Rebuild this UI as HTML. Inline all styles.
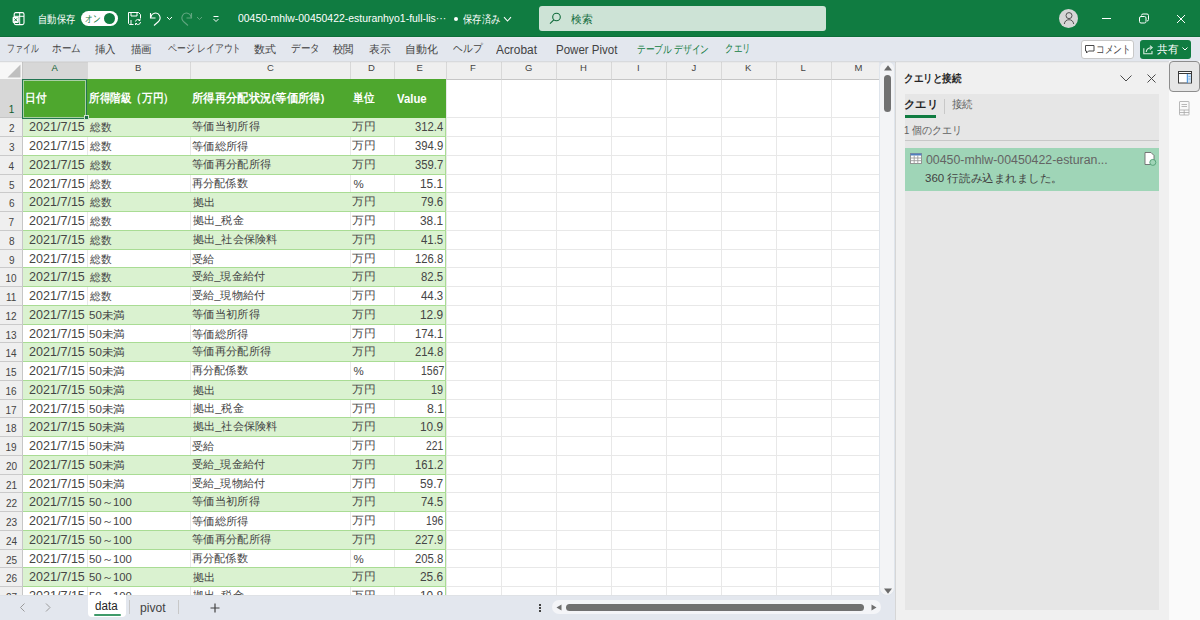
<!DOCTYPE html>
<html><head><meta charset="utf-8">
<style>
*{box-sizing:border-box;margin:0;padding:0}
html,body{width:1200px;height:620px;overflow:hidden;background:#fff}
body{position:relative;font-family:"Liberation Sans",sans-serif;color:#242424}
.a{position:absolute}
i{font-style:normal}
/* title bar */
#tb{position:absolute;left:0;top:0;width:1200px;height:37px;background:#107c41;color:#fff;border-bottom:1px solid #0d6e39}
#tb .t{position:absolute;white-space:nowrap}
#search{position:absolute;left:539px;top:6px;width:287px;height:25px;background:#cde3d6;border-radius:3px}
/* ribbon */
#rb{position:absolute;left:0;top:37px;width:1200px;height:24px;background:#e3e7ee;border-top:1px solid #e8ebf1}
#rb .tab{position:absolute;top:6px;font-size:11.5px;line-height:14px;color:#424242;white-space:nowrap}
#rb .tab.g{color:#107c41}
/* grid */
#grid{position:absolute;left:0;top:61px;width:880px;height:534px;background:#fff;overflow:hidden}
.ch{position:absolute;top:0;height:19px;background:#efefef;border-right:1px solid #d8d8d8;border-bottom:1px solid #c6c6c6}
.ch.sel{background:#d7d7d7;border-bottom:1px solid #1e6e43}
.rh{position:absolute;left:0;width:23px;background:#efefef;border-right:1px solid #c6c6c6;border-bottom:1px solid #cacaca}
.vg{position:absolute;top:19px;width:1px;height:534px;background:#e8e8e8}
.hg{position:absolute;left:22px;width:858px;height:1px;background:#e8e8e8}
.band{position:absolute;left:23px;width:423px;background:#daf2d0;border-bottom:1px solid #a9dc94;border-right:1px solid #a9dc94}
.nob{position:absolute;left:23px;width:423px;border-bottom:1px solid #a9dc94;border-right:1px solid #a9dc94}
.tx{position:absolute;line-height:1;white-space:nowrap;transform-origin:0 0}
/* scrollbar */
#vs{position:absolute;left:879px;top:61px;width:16px;height:559px;background:#e3e7ee}
/* pane */
#pane{position:absolute;left:895px;top:61px;width:274px;height:559px;background:#f0f0f0;border-left:1px solid #d6d6d6}
#side{position:absolute;left:1169px;top:61px;width:31px;height:559px;background:#fafafa}
#tabs{position:absolute;left:0;top:595px;width:879px;height:25px;background:#e3e7ee}
</style></head><body>

<div id="tb">
  <!-- excel icon -->
  <svg class="a" style="left:8px;top:8px" width="22" height="22" viewBox="0 0 22 22">
    <rect x="6.2" y="4.6" width="9.8" height="12" rx="1.6" fill="none" stroke="#fff" stroke-width="1.1"/>
    <path d="M6.2 8.3h9.8M11.7 4.6v12" fill="none" stroke="#fff" stroke-width="1"/>
    <rect x="4.6" y="8.7" width="6.2" height="6.2" rx="1.2" fill="#fff"/>
    <path d="M6.4 10.4l2.6 2.8M9 10.4l-2.6 2.8" stroke="#107c41" stroke-width="1"/>
  </svg>
  <div class="a" style="left:81px;top:10.5px;width:37px;height:15.5px;background:#fff;border-radius:8px"></div>
  <div class="a" style="left:104px;top:12.5px;width:11px;height:11px;border-radius:50%;background:#107c41"></div>
  <!-- save icon -->
  <svg class="a" style="left:127px;top:11px" width="15" height="15" viewBox="0 0 15 15" fill="none" stroke="#fff" stroke-width="1">
    <path d="M1.5 1.5h10l2 2v4M1.5 1.5v11l1 1h4"/>
    <path d="M4 1.5v3.5h6V1.5M4 13.5V9"/>
    <path d="M8.5 10.5a2.5 2.5 0 0 1 4.5-1M13.5 11a2.5 2.5 0 0 1-4.5 1.5M13 8v1.5h-1.5M8.5 14v-1.5H10"/>
  </svg>
  <!-- undo -->
  <svg class="a" style="left:149px;top:11px" width="14" height="15" viewBox="0 0 14 15" fill="none" stroke="#fff" stroke-width="1.1">
    <path d="M2 6.5a4.5 4.5 0 0 1 8.5-2c1.2 2.3 0.4 4.8-1.5 6.5L5 14.5"/>
    <path d="M1.5 2v5h5"/>
  </svg>
  <svg class="a" style="left:166px;top:16px" width="7" height="5" viewBox="0 0 7 5" fill="none" stroke="#fff" stroke-width="1"><path d="M1 1l2.5 2.5L6 1"/></svg>
  <!-- redo dim -->
  <svg class="a" style="left:179px;top:11px" width="14" height="15" viewBox="0 0 14 15" fill="none" stroke="#5fa57f" stroke-width="1.1">
    <path d="M12 6.5a4.5 4.5 0 0 0-8.5-2c-1.2 2.3-0.4 4.8 1.5 6.5L9 14.5"/>
    <path d="M12.5 2v5h-5"/>
  </svg>
  <svg class="a" style="left:196px;top:16px" width="7" height="5" viewBox="0 0 7 5" fill="none" stroke="#5fa57f" stroke-width="1"><path d="M1 1l2.5 2.5L6 1"/></svg>
  <svg class="a" style="left:212px;top:15px" width="8" height="8" viewBox="0 0 8 8" fill="none" stroke="#fff" stroke-width="1"><path d="M1.5 1.5h5M1.5 4l2.5 2.5L6.5 4"/></svg>
  <div class="a" style="left:454px;top:17px;width:4px;height:4px;border-radius:50%;background:#fff"></div>
  <svg class="a" style="left:502.5px;top:15.5px" width="9" height="7" viewBox="0 0 9 7" fill="none" stroke="#fff" stroke-width="1.1"><path d="M1 1.2l3.5 3.8 3.5-3.8"/></svg>
  <div id="search">
    <svg class="a" style="left:10px;top:6px" width="13" height="13" viewBox="0 0 13 13" fill="none" stroke="#0f6a3a" stroke-width="1.1"><circle cx="7.5" cy="5" r="3.8"/><path d="M4.8 7.8L1 11.6"/></svg>
  </div>
  <!-- avatar -->
  <div class="a" style="left:1059px;top:9px;width:19px;height:19px;border-radius:50%;background:#d6d6d6"></div>
  <svg class="a" style="left:1062px;top:11px" width="14" height="14" viewBox="0 0 14 14" fill="none" stroke="#505050" stroke-width="1"><circle cx="7" cy="4.6" r="3"/><path d="M2.3 13c0.4-2.7 2.1-4.3 4.7-4.3s4.3 1.6 4.7 4.3"/></svg>
  <div class="a" style="left:1102px;top:18px;width:9px;height:1px;background:#fff"></div>
  <svg class="a" style="left:1138px;top:13px" width="12" height="11" viewBox="0 0 12 11" fill="none" stroke="#fff" stroke-width="1"><rect x="1.5" y="3.5" width="6.5" height="6.5" rx="1.5"/><path d="M3.5 2.5a1.5 1.5 0 0 1 1.5-1.5h4a1.5 1.5 0 0 1 1.5 1.5v4a1.5 1.5 0 0 1-1.5 1.5"/></svg>
  <svg class="a" style="left:1176px;top:14px" width="10" height="10" viewBox="0 0 10 10" fill="none" stroke="#fff" stroke-width="1"><path d="M1 1l8 8M9 1L1 9"/></svg>
</div>

<div id="rb">
  <div class="a" style="left:1081px;top:2px;width:53px;height:19px;background:#fff;border:1px solid #c8c8c8;border-radius:3px"></div>
  <svg class="a" style="left:1085px;top:7px" width="10" height="9" viewBox="0 0 10 9" fill="none" stroke="#4a4a4a" stroke-width="1"><path d="M0.5 0.5h8.5v5.5h-5.5l-2 2v-2h-1z" stroke-linejoin="round"/></svg>
  <div class="a" style="left:1140px;top:2px;width:51px;height:19px;background:#107c41;border-radius:3px"></div>
  <svg class="a" style="left:1142px;top:5px" width="12" height="12" viewBox="0 0 12 12" fill="none" stroke="#d8ecdf" stroke-width="1.1"><path d="M1.8 5.2V10.8H10V8"/><path d="M4.2 9C4.4 6.4 6.2 4.8 9.6 4.6"/><path d="M7.9 2.6L10.2 4.6L7.9 6.6"/></svg>
  <svg class="a" style="left:1182px;top:9px" width="6" height="4" viewBox="0 0 6 4" fill="none" stroke="#fff" stroke-width="1"><path d="M0.5 0.5l2.5 2.5 2.5-2.5"/></svg>
</div>

<div id="grid">
  <div class="a" style="left:0;top:0;width:23px;height:19px;background:#f7f7f7;border-bottom:1px solid #c6c6c6;border-right:1px solid #c6c6c6"></div>
  <svg class="a" style="left:7px;top:3px" width="14" height="14" viewBox="0 0 14 14"><path d="M13.5 0.5v13H0.5z" fill="#bfbfbf"/></svg>
<div class="ch sel" style="left:23px;width:65px"></div>
<div class="ch" style="left:88px;width:103px"></div>
<div class="ch" style="left:191px;width:160px"></div>
<div class="ch" style="left:351px;width:44px"></div>
<div class="ch" style="left:395px;width:52px"></div>
<div class="ch" style="left:447px;width:55px"></div>
<div class="ch" style="left:502px;width:55px"></div>
<div class="ch" style="left:557px;width:55px"></div>
<div class="ch" style="left:612px;width:55px"></div>
<div class="ch" style="left:667px;width:55px"></div>
<div class="ch" style="left:722px;width:55px"></div>
<div class="ch" style="left:777px;width:55px"></div>
<div class="ch" style="left:832px;width:49px"></div>
<div class="vg" style="left:87px"></div>
<div class="vg" style="left:190px"></div>
<div class="vg" style="left:350px"></div>
<div class="vg" style="left:394px"></div>
<div class="vg" style="left:446px"></div>
<div class="vg" style="left:501px"></div>
<div class="vg" style="left:556px"></div>
<div class="vg" style="left:611px"></div>
<div class="vg" style="left:666px"></div>
<div class="vg" style="left:721px"></div>
<div class="vg" style="left:776px"></div>
<div class="vg" style="left:831px"></div>
<div class="hg" style="top:56px"></div>
<div class="hg" style="top:75px"></div>
<div class="hg" style="top:94px"></div>
<div class="hg" style="top:113px"></div>
<div class="hg" style="top:131px"></div>
<div class="hg" style="top:150px"></div>
<div class="hg" style="top:169px"></div>
<div class="hg" style="top:188px"></div>
<div class="hg" style="top:206px"></div>
<div class="hg" style="top:225px"></div>
<div class="hg" style="top:244px"></div>
<div class="hg" style="top:263px"></div>
<div class="hg" style="top:281px"></div>
<div class="hg" style="top:300px"></div>
<div class="hg" style="top:319px"></div>
<div class="hg" style="top:338px"></div>
<div class="hg" style="top:356px"></div>
<div class="hg" style="top:375px"></div>
<div class="hg" style="top:394px"></div>
<div class="hg" style="top:413px"></div>
<div class="hg" style="top:431px"></div>
<div class="hg" style="top:450px"></div>
<div class="hg" style="top:469px"></div>
<div class="hg" style="top:488px"></div>
<div class="hg" style="top:506px"></div>
<div class="hg" style="top:525px"></div>
<div class="hg" style="top:544px"></div>
<div class="hg" style="top:563px"></div>
<div class="rh" style="top:57px;height:19px"></div>
<div class="rh" style="top:76px;height:19px"></div>
<div class="rh" style="top:95px;height:19px"></div>
<div class="rh" style="top:114px;height:18px"></div>
<div class="rh" style="top:132px;height:19px"></div>
<div class="rh" style="top:151px;height:19px"></div>
<div class="rh" style="top:170px;height:19px"></div>
<div class="rh" style="top:189px;height:18px"></div>
<div class="rh" style="top:207px;height:19px"></div>
<div class="rh" style="top:226px;height:19px"></div>
<div class="rh" style="top:245px;height:19px"></div>
<div class="rh" style="top:264px;height:18px"></div>
<div class="rh" style="top:282px;height:19px"></div>
<div class="rh" style="top:301px;height:19px"></div>
<div class="rh" style="top:320px;height:19px"></div>
<div class="rh" style="top:339px;height:18px"></div>
<div class="rh" style="top:357px;height:19px"></div>
<div class="rh" style="top:376px;height:19px"></div>
<div class="rh" style="top:395px;height:19px"></div>
<div class="rh" style="top:414px;height:18px"></div>
<div class="rh" style="top:432px;height:19px"></div>
<div class="rh" style="top:451px;height:19px"></div>
<div class="rh" style="top:470px;height:19px"></div>
<div class="rh" style="top:489px;height:18px"></div>
<div class="rh" style="top:507px;height:19px"></div>
<div class="rh" style="top:526px;height:19px"></div>
<div class="rh" style="top:545px;height:19px"></div>
<div class="band" style="top:57px;height:19px"></div>
<div class="nob" style="top:76px;height:19px"></div>
<div class="band" style="top:95px;height:19px"></div>
<div class="nob" style="top:114px;height:18px"></div>
<div class="band" style="top:132px;height:19px"></div>
<div class="nob" style="top:151px;height:19px"></div>
<div class="band" style="top:170px;height:19px"></div>
<div class="nob" style="top:189px;height:18px"></div>
<div class="band" style="top:207px;height:19px"></div>
<div class="nob" style="top:226px;height:19px"></div>
<div class="band" style="top:245px;height:19px"></div>
<div class="nob" style="top:264px;height:18px"></div>
<div class="band" style="top:282px;height:19px"></div>
<div class="nob" style="top:301px;height:19px"></div>
<div class="band" style="top:320px;height:19px"></div>
<div class="nob" style="top:339px;height:18px"></div>
<div class="band" style="top:357px;height:19px"></div>
<div class="nob" style="top:376px;height:19px"></div>
<div class="band" style="top:395px;height:19px"></div>
<div class="nob" style="top:414px;height:18px"></div>
<div class="band" style="top:432px;height:19px"></div>
<div class="nob" style="top:451px;height:19px"></div>
<div class="band" style="top:470px;height:19px"></div>
<div class="nob" style="top:489px;height:18px"></div>
<div class="band" style="top:507px;height:19px"></div>
<div class="nob" style="top:526px;height:19px"></div>
<div class="band" style="top:545px;height:19px"></div>
  <div class="rh" style="top:18px;height:39px;background:#d7d7d7;border-right:1px solid #1e6e43;border-bottom:1px solid #c6c6c6"></div>
  <div class="a" style="left:23px;top:18px;width:423px;height:39px;background:#4ea72e"></div>
  <div class="a" style="left:22px;top:18px;width:65px;height:40px;border:1px solid #237552;box-shadow:inset 0 0 0 1px #a9cfa5"></div>
  <div class="a" style="left:84px;top:54px;width:5px;height:5px;background:#1f6e48;border:1px solid #cfe3cf"></div>
</div>

<div id="vs">
  <div class="a" style="left:0;top:0;width:16px;height:535px;background:#f3f4f6;border:1px solid #dfe5ec;border-radius:7px 7px 8px 8px"></div>
  <svg class="a" style="left:4.5px;top:4px" width="8" height="6" viewBox="0 0 8 6"><path d="M0 5.5L4 0.2l4 5.3z" fill="#6a6a6a"/></svg>
  <div class="a" style="left:5px;top:13.5px;width:7px;height:37px;border-radius:3.5px;background:#717171"></div>
  <svg class="a" style="left:4.5px;top:527px" width="8" height="6" viewBox="0 0 8 6"><path d="M0 0.5L4 5.8l4-5.3z" fill="#6a6a6a"/></svg>
</div>

<div id="pane">
  <svg class="a" style="left:224px;top:14px" width="12" height="7" viewBox="0 0 12 7" fill="none" stroke="#4a4a4a" stroke-width="1"><path d="M0.5 0.5l5.5 5.5 5.5-5.5"/></svg>
  <svg class="a" style="left:251px;top:13px" width="9" height="9" viewBox="0 0 9 9" fill="none" stroke="#4a4a4a" stroke-width="1"><path d="M0.5 0.5l8 8M8.5 0.5l-8 8"/></svg>
  <div class="a" style="left:9px;top:33px;width:254px;height:516px;background:#e6e6e6">
    <div class="a" style="left:0;top:21px;width:31px;height:3px;background:#107c41"></div>
    <div class="a" style="left:39px;top:5px;width:1px;height:15px;background:#c8c8c8"></div>
    <div class="a" style="left:0;top:46px;width:254px;height:1px;background:#c8c8c8"></div>
    <div class="a" style="left:0;top:54px;width:254px;height:43px;background:#9fd5b7">
      <svg class="a" style="left:5px;top:5px" width="12" height="11" viewBox="0 0 12 11" fill="none" stroke="#9a9a9a" stroke-width="0.9"><rect x="0.5" y="0.5" width="11" height="10" fill="#fff" stroke="#8c8c8c"/><path d="M0.5 0.5h11v2h-11z" fill="#4f7fbf" stroke="none"/><path d="M0.5 5h11M0.5 7.7h11M4.2 2.5v8M7.8 2.5v8"/></svg>
      <svg class="a" style="left:239px;top:4px" width="14" height="15" viewBox="0 0 14 15" fill="none" stroke="#6b6b6b" stroke-width="0.9"><path d="M1 0.5h6l3 3v9H1z" fill="#fff"/><circle cx="8.8" cy="10.4" r="3" fill="#9fd5b7" stroke="#5aa57c" stroke-width="1"/></svg>
    </div>
  </div>
</div>

<div id="side">
  <div class="a" style="left:0;top:0;width:31px;height:31px;background:#e6e6e6;border:1px solid #8d8d8d;border-radius:4px"></div>
  <svg class="a" style="left:8.5px;top:9.5px" width="14" height="13" viewBox="0 0 14 13" fill="none" stroke="#3a3a3a" stroke-width="1"><rect x="0.5" y="0.5" width="13" height="11.5" fill="#fff"/><path d="M0.5 2.5h13"/><rect x="9.3" y="3" width="3.7" height="8.5" fill="#cfe3f5" stroke="none"/><path d="M9.3 3v9" stroke="#3b8ad9"/><path d="M10.5 5.5h2M10.5 8h2" stroke="#6aa7e0" stroke-width="0.8"/></svg>
  <svg class="a" style="left:10px;top:39.5px" width="11" height="15" viewBox="0 0 11 15" fill="none" stroke="#a8a8a8" stroke-width="0.8"><rect x="0.5" y="0.5" width="9.5" height="13.5" rx="0.5"/><path d="M2.5 3.5h5.5M2.5 5.5h5.5M0.5 9h9.5M0.5 11.5h9.5M5.2 9v5"/></svg>
</div>

<div id="tabs">
  <svg class="a" style="left:19px;top:8px" width="7" height="9" viewBox="0 0 7 9" fill="none" stroke="#9a9a9a" stroke-width="1"><path d="M5.5 0.5l-4 4 4 4"/></svg>
  <svg class="a" style="left:45px;top:8px" width="7" height="9" viewBox="0 0 7 9" fill="none" stroke="#9a9a9a" stroke-width="1"><path d="M1 0.5l4 4-4 4"/></svg>
  <div class="a" style="left:88px;top:0;width:38px;height:22px;background:#fff;border-radius:0 0 4px 4px"></div>
  <div class="a" style="left:94px;top:19px;width:27px;height:2px;background:#3f9a6a;border-radius:1px"></div>
  <div class="a" style="left:129px;top:5px;width:1px;height:14px;background:#c8c8c8"></div>
  <div class="a" style="left:178px;top:5px;width:1px;height:14px;background:#c8c8c8"></div>
  <svg class="a" style="left:210px;top:8px" width="10" height="10" viewBox="0 0 10 10" fill="none" stroke="#424242" stroke-width="1.2"><path d="M5 0.5v9M0.5 5h9"/></svg>
  <div class="a" style="left:539px;top:9px;width:2px;height:2px;background:#424242"></div>
  <div class="a" style="left:539px;top:12px;width:2px;height:2px;background:#424242"></div>
  <div class="a" style="left:539px;top:15px;width:2px;height:2px;background:#424242"></div>
  <div class="a" style="left:552px;top:5px;width:329px;height:14px;background:#f4f5f8;border-radius:7px"></div>
  <svg class="a" style="left:556px;top:9px" width="6" height="7" viewBox="0 0 6 7"><path d="M5.5 0.5v6L0.5 3.5z" fill="#6e6e6e"/></svg>
  <div class="a" style="left:566px;top:9px;width:298px;height:7px;background:#717171;border-radius:4px"></div>
  <svg class="a" style="left:871px;top:9px" width="6" height="7" viewBox="0 0 6 7"><path d="M0.5 0.5v6L5.5 3.5z" fill="#6e6e6e"/></svg>
</div>

<div class="a" style="left:0;top:61px;width:1169px;height:1px;background:#d8dadd"></div>
<div class="a" style="left:0;top:62px;width:1169px;height:1px;background:rgba(0,0,0,0.025)"></div>
<div class="a" style="left:0;top:595px;width:88px;height:1px;background:#dfe2e6"></div><div class="a" style="left:126px;top:595px;width:753px;height:1px;background:#dfe2e6"></div>
<div class="tx" style="left:38.06px;top:13.93px;font-size:10.5px;color:#fff;transform:scaleX(0.842);--w:37.04px;">自動保存</div>
<div class="tx" style="left:85.44px;top:14.25px;font-size:10px;color:#107c41;transform:scaleX(0.761);--w:15.22px;">オン</div>
<div class="tx" style="left:238.30px;top:12.65px;font-size:10.5px;color:#fff;transform:scaleX(0.994);--w:208.23px;">00450-mhlw-00450422-esturanhyo1-full-lis···</div>
<div class="tx" style="left:462.50px;top:13.93px;font-size:10.5px;color:#fff;transform:scaleX(0.849);--w:37.35px;">保存済み</div>
<div class="tx" style="left:571.00px;top:13.75px;font-size:10.5px;color:#0f6a3a;transform:scaleX(0.977);--w:21.50px;">検索</div>
<div class="tx" style="left:7.32px;top:43.40px;font-size:11px;color:#424242;transform:scaleX(0.714);--w:31.43px;">ファイル</div>
<div class="tx" style="left:51.63px;top:43.40px;font-size:11px;color:#424242;transform:scaleX(0.871);--w:28.74px;">ホーム</div>
<div class="tx" style="left:95.00px;top:43.90px;font-size:11px;color:#424242;transform:scaleX(0.952);--w:20.95px;">挿入</div>
<div class="tx" style="left:131.00px;top:43.90px;font-size:11px;color:#424242;transform:scaleX(0.952);--w:20.95px;">描画</div>
<div class="tx" style="left:168.00px;top:43.40px;font-size:11px;color:#424242;transform:scaleX(0.804);--w:73.21px;">ページ レイアウト</div>
<div class="tx" style="left:254.00px;top:43.90px;font-size:11px;color:#424242;--w:22.00px;">数式</div>
<div class="tx" style="left:291.13px;top:43.40px;font-size:11px;color:#424242;transform:scaleX(0.867);--w:28.60px;">データ</div>
<div class="tx" style="left:333.00px;top:43.90px;font-size:11px;color:#424242;transform:scaleX(0.943);--w:20.75px;">校閲</div>
<div class="tx" style="left:368.52px;top:43.90px;font-size:11px;color:#424242;transform:scaleX(0.976);--w:21.48px;">表示</div>
<div class="tx" style="left:404.76px;top:43.90px;font-size:11px;color:#424242;transform:scaleX(0.992);--w:32.74px;">自動化</div>
<div class="tx" style="left:452.50px;top:42.90px;font-size:11px;color:#424242;transform:scaleX(0.887);--w:29.27px;">ヘルプ</div>
<div class="tx" style="left:496.10px;top:43.95px;font-size:12px;color:#424242;transform:scaleX(0.990);">Acrobat</div>
<div class="tx" style="left:556.04px;top:43.95px;font-size:12px;color:#424242;transform:scaleX(0.960);">Power Pivot</div>
<div class="tx" style="left:636.71px;top:43.90px;font-size:11px;color:#107c41;transform:scaleX(0.792);--w:72.13px;">テーブル デザイン</div>
<div class="tx" style="left:725.45px;top:43.40px;font-size:11px;color:#107c41;transform:scaleX(0.777);--w:25.63px;">クエリ</div>
<div class="tx" style="left:1096.02px;top:44.30px;font-size:11px;color:#424242;transform:scaleX(0.792);--w:34.86px;">コメント</div>
<div class="tx" style="left:1156.50px;top:44.20px;font-size:11px;color:#fff;transform:scaleX(0.962);--w:21.16px;">共有</div>
<div class="tx" style="left:51.50px;top:62.70px;font-size:9.5px;color:#0e5c2f;">A</div>
<div class="tx" style="left:135.00px;top:62.70px;font-size:9.5px;color:#444;">B</div>
<div class="tx" style="left:267.00px;top:62.70px;font-size:9.5px;color:#444;">C</div>
<div class="tx" style="left:368.00px;top:62.70px;font-size:9.5px;color:#444;">D</div>
<div class="tx" style="left:416.50px;top:62.70px;font-size:9.5px;color:#444;">E</div>
<div class="tx" style="left:470.00px;top:62.70px;font-size:9.5px;color:#444;">F</div>
<div class="tx" style="left:525.00px;top:62.70px;font-size:9.5px;color:#444;">G</div>
<div class="tx" style="left:580.00px;top:62.70px;font-size:9.5px;color:#444;">H</div>
<div class="tx" style="left:637.00px;top:62.70px;font-size:9.5px;color:#444;">I</div>
<div class="tx" style="left:691.50px;top:62.70px;font-size:9.5px;color:#444;">J</div>
<div class="tx" style="left:745.00px;top:62.70px;font-size:9.5px;color:#444;">K</div>
<div class="tx" style="left:800.50px;top:62.70px;font-size:9.5px;color:#444;">L</div>
<div class="tx" style="left:854.50px;top:62.70px;font-size:9.5px;color:#444;">M</div>
<div class="tx" style="left:24.92px;top:92.75px;font-size:11.5px;font-weight:bold;color:#fff;transform:scaleX(0.891);--w:21.38px;">日付</div>
<div class="tx" style="left:88.80px;top:92.75px;font-size:11.5px;font-weight:bold;color:#fff;transform:scaleX(0.884);--w:84.89px;">所得階級（万円）</div>
<div class="tx" style="left:192.40px;top:92.75px;font-size:11.5px;font-weight:bold;color:#fff;transform:scaleX(0.947);--w:132.34px;">所得再分配状況(等価所得)</div>
<div class="tx" style="left:353.40px;top:92.75px;font-size:11.5px;font-weight:bold;color:#fff;transform:scaleX(0.892);--w:21.40px;">単位</div>
<div class="tx" style="left:397.30px;top:92.50px;font-size:12px;font-weight:bold;color:#fff;transform:scaleX(0.945);">Value</div>
<div class="tx" style="left:8.75px;top:105.15px;font-size:10px;color:#0e5c2f;">1</div>
<div class="a" style="left:0;top:0;width:880px;height:595px;overflow:hidden">
<div class="tx" style="left:9.00px;top:123.95px;font-size:10px;color:#444;">2</div>
<div class="tx" style="left:28.75px;top:121.20px;font-size:12px;color:#454545;transform:scaleX(1.046);">2021/7/15</div>
<div class="tx" style="left:89.90px;top:121.70px;font-size:11px;color:#454545;transform:scaleX(0.968);--w:21.30px;">総数</div>
<div class="tx" style="left:191.97px;top:121.20px;font-size:11px;color:#454545;transform:scaleX(1.030);--w:67.96px;">等価当初所得</div>
<div class="tx" style="left:352.33px;top:121.20px;font-size:11px;color:#454545;transform:scaleX(1.070);--w:23.54px;">万円</div>
<div class="tx" style="left:415.06px;top:121.20px;font-size:12px;color:#454545;transform:scaleX(0.940);">312.4</div>
<div class="tx" style="left:9.00px;top:142.95px;font-size:10px;color:#444;">3</div>
<div class="tx" style="left:28.75px;top:140.20px;font-size:12px;color:#454545;transform:scaleX(1.046);">2021/7/15</div>
<div class="tx" style="left:89.90px;top:140.70px;font-size:11px;color:#454545;transform:scaleX(0.968);--w:21.30px;">総数</div>
<div class="tx" style="left:191.97px;top:140.70px;font-size:11px;color:#454545;transform:scaleX(1.033);--w:56.82px;">等価総所得</div>
<div class="tx" style="left:352.33px;top:140.20px;font-size:11px;color:#454545;transform:scaleX(1.070);--w:23.54px;">万円</div>
<div class="tx" style="left:415.06px;top:140.20px;font-size:12px;color:#454545;transform:scaleX(0.940);">394.9</div>
<div class="tx" style="left:8.50px;top:161.95px;font-size:10px;color:#444;">4</div>
<div class="tx" style="left:28.75px;top:159.20px;font-size:12px;color:#454545;transform:scaleX(1.046);">2021/7/15</div>
<div class="tx" style="left:89.90px;top:159.70px;font-size:11px;color:#454545;transform:scaleX(0.968);--w:21.30px;">総数</div>
<div class="tx" style="left:191.97px;top:159.20px;font-size:11px;color:#454545;transform:scaleX(1.027);--w:79.10px;">等価再分配所得</div>
<div class="tx" style="left:352.33px;top:159.20px;font-size:11px;color:#454545;transform:scaleX(1.070);--w:23.54px;">万円</div>
<div class="tx" style="left:415.06px;top:159.20px;font-size:12px;color:#454545;transform:scaleX(0.940);">359.7</div>
<div class="tx" style="left:9.00px;top:180.95px;font-size:10px;color:#444;">5</div>
<div class="tx" style="left:28.75px;top:178.20px;font-size:12px;color:#454545;transform:scaleX(1.046);">2021/7/15</div>
<div class="tx" style="left:89.90px;top:178.70px;font-size:11px;color:#454545;transform:scaleX(0.968);--w:21.30px;">総数</div>
<div class="tx" style="left:191.99px;top:178.20px;font-size:11px;color:#454545;transform:scaleX(1.014);--w:55.76px;">再分配係数</div>
<div class="tx" style="left:353.40px;top:178.70px;font-size:11.5px;color:#454545;">%</div>
<div class="tx" style="left:420.46px;top:178.20px;font-size:12px;color:#454545;transform:scaleX(0.991);">15.1</div>
<div class="tx" style="left:9.00px;top:198.95px;font-size:10px;color:#444;">6</div>
<div class="tx" style="left:28.75px;top:196.20px;font-size:12px;color:#454545;transform:scaleX(1.046);">2021/7/15</div>
<div class="tx" style="left:89.90px;top:196.70px;font-size:11px;color:#454545;transform:scaleX(0.968);--w:21.30px;">総数</div>
<div class="tx" style="left:193.00px;top:196.70px;font-size:11px;color:#454545;transform:scaleX(1.014);--w:22.31px;">拠出</div>
<div class="tx" style="left:352.33px;top:196.20px;font-size:11px;color:#454545;transform:scaleX(1.070);--w:23.54px;">万円</div>
<div class="tx" style="left:421.45px;top:196.20px;font-size:12px;color:#454545;transform:scaleX(0.948);">79.6</div>
<div class="tx" style="left:8.50px;top:217.95px;font-size:10px;color:#444;">7</div>
<div class="tx" style="left:28.75px;top:215.20px;font-size:12px;color:#454545;transform:scaleX(1.046);">2021/7/15</div>
<div class="tx" style="left:89.90px;top:215.70px;font-size:11px;color:#454545;transform:scaleX(0.968);--w:21.30px;">総数</div>
<div class="tx" style="left:193.00px;top:215.20px;font-size:11px;color:#454545;transform:scaleX(1.012);--w:50.74px;">拠出_税金</div>
<div class="tx" style="left:352.33px;top:215.20px;font-size:11px;color:#454545;transform:scaleX(1.070);--w:23.54px;">万円</div>
<div class="tx" style="left:420.46px;top:215.20px;font-size:12px;color:#454545;transform:scaleX(0.991);">38.1</div>
<div class="tx" style="left:9.00px;top:236.95px;font-size:10px;color:#444;">8</div>
<div class="tx" style="left:28.75px;top:234.20px;font-size:12px;color:#454545;transform:scaleX(1.046);">2021/7/15</div>
<div class="tx" style="left:89.90px;top:234.70px;font-size:11px;color:#454545;transform:scaleX(0.968);--w:21.30px;">総数</div>
<div class="tx" style="left:193.00px;top:234.20px;font-size:11px;color:#454545;transform:scaleX(1.013);--w:84.19px;">拠出_社会保険料</div>
<div class="tx" style="left:352.33px;top:234.20px;font-size:11px;color:#454545;transform:scaleX(1.070);--w:23.54px;">万円</div>
<div class="tx" style="left:421.45px;top:234.20px;font-size:12px;color:#454545;transform:scaleX(0.948);">41.5</div>
<div class="tx" style="left:9.00px;top:255.95px;font-size:10px;color:#444;">9</div>
<div class="tx" style="left:28.75px;top:253.20px;font-size:12px;color:#454545;transform:scaleX(1.046);">2021/7/15</div>
<div class="tx" style="left:89.90px;top:253.70px;font-size:11px;color:#454545;transform:scaleX(0.968);--w:21.30px;">総数</div>
<div class="tx" style="left:191.99px;top:253.70px;font-size:11px;color:#454545;transform:scaleX(1.014);--w:22.31px;">受給</div>
<div class="tx" style="left:352.33px;top:253.20px;font-size:11px;color:#454545;transform:scaleX(1.070);--w:23.54px;">万円</div>
<div class="tx" style="left:415.06px;top:253.20px;font-size:12px;color:#454545;transform:scaleX(0.940);">126.8</div>
<div class="tx" style="left:5.50px;top:273.95px;font-size:10px;color:#444;">10</div>
<div class="tx" style="left:28.75px;top:271.20px;font-size:12px;color:#454545;transform:scaleX(1.046);">2021/7/15</div>
<div class="tx" style="left:89.90px;top:271.70px;font-size:11px;color:#454545;transform:scaleX(0.968);--w:21.30px;">総数</div>
<div class="tx" style="left:191.99px;top:271.20px;font-size:11px;color:#454545;transform:scaleX(1.013);--w:73.04px;">受給_現金給付</div>
<div class="tx" style="left:352.33px;top:271.20px;font-size:11px;color:#454545;transform:scaleX(1.070);--w:23.54px;">万円</div>
<div class="tx" style="left:421.45px;top:271.20px;font-size:12px;color:#454545;transform:scaleX(0.948);">82.5</div>
<div class="tx" style="left:6.00px;top:292.95px;font-size:10px;color:#444;">11</div>
<div class="tx" style="left:28.75px;top:290.20px;font-size:12px;color:#454545;transform:scaleX(1.046);">2021/7/15</div>
<div class="tx" style="left:89.90px;top:290.70px;font-size:11px;color:#454545;transform:scaleX(0.968);--w:21.30px;">総数</div>
<div class="tx" style="left:191.99px;top:290.20px;font-size:11px;color:#454545;transform:scaleX(1.013);--w:73.04px;">受給_現物給付</div>
<div class="tx" style="left:352.33px;top:290.20px;font-size:11px;color:#454545;transform:scaleX(1.070);--w:23.54px;">万円</div>
<div class="tx" style="left:421.45px;top:290.20px;font-size:12px;color:#454545;transform:scaleX(0.948);">44.3</div>
<div class="tx" style="left:5.50px;top:311.95px;font-size:10px;color:#444;">12</div>
<div class="tx" style="left:28.75px;top:309.20px;font-size:12px;color:#454545;transform:scaleX(1.046);">2021/7/15</div>
<div class="tx" style="left:88.85px;top:309.70px;font-size:11px;color:#454545;transform:scaleX(1.053);--w:36.07px;">50未満</div>
<div class="tx" style="left:191.97px;top:309.20px;font-size:11px;color:#454545;transform:scaleX(1.030);--w:67.96px;">等価当初所得</div>
<div class="tx" style="left:352.33px;top:309.20px;font-size:11px;color:#454545;transform:scaleX(1.070);--w:23.54px;">万円</div>
<div class="tx" style="left:420.46px;top:309.20px;font-size:12px;color:#454545;transform:scaleX(0.991);">12.9</div>
<div class="tx" style="left:5.50px;top:330.95px;font-size:10px;color:#444;">13</div>
<div class="tx" style="left:28.75px;top:328.20px;font-size:12px;color:#454545;transform:scaleX(1.046);">2021/7/15</div>
<div class="tx" style="left:88.85px;top:328.70px;font-size:11px;color:#454545;transform:scaleX(1.053);--w:36.07px;">50未満</div>
<div class="tx" style="left:191.97px;top:328.70px;font-size:11px;color:#454545;transform:scaleX(1.033);--w:56.82px;">等価総所得</div>
<div class="tx" style="left:352.33px;top:328.20px;font-size:11px;color:#454545;transform:scaleX(1.070);--w:23.54px;">万円</div>
<div class="tx" style="left:415.06px;top:328.20px;font-size:12px;color:#454545;transform:scaleX(0.940);">174.1</div>
<div class="tx" style="left:5.50px;top:348.95px;font-size:10px;color:#444;">14</div>
<div class="tx" style="left:28.75px;top:346.20px;font-size:12px;color:#454545;transform:scaleX(1.046);">2021/7/15</div>
<div class="tx" style="left:88.85px;top:346.70px;font-size:11px;color:#454545;transform:scaleX(1.053);--w:36.07px;">50未満</div>
<div class="tx" style="left:191.97px;top:346.20px;font-size:11px;color:#454545;transform:scaleX(1.027);--w:79.10px;">等価再分配所得</div>
<div class="tx" style="left:352.33px;top:346.20px;font-size:11px;color:#454545;transform:scaleX(1.070);--w:23.54px;">万円</div>
<div class="tx" style="left:415.06px;top:346.20px;font-size:12px;color:#454545;transform:scaleX(0.940);">214.8</div>
<div class="tx" style="left:5.50px;top:367.95px;font-size:10px;color:#444;">15</div>
<div class="tx" style="left:28.75px;top:365.20px;font-size:12px;color:#454545;transform:scaleX(1.046);">2021/7/15</div>
<div class="tx" style="left:88.85px;top:365.70px;font-size:11px;color:#454545;transform:scaleX(1.053);--w:36.07px;">50未満</div>
<div class="tx" style="left:191.99px;top:365.20px;font-size:11px;color:#454545;transform:scaleX(1.014);--w:55.76px;">再分配係数</div>
<div class="tx" style="left:353.40px;top:365.70px;font-size:11.5px;color:#454545;">%</div>
<div class="tx" style="left:420.58px;top:365.20px;font-size:12px;color:#454545;transform:scaleX(0.872);">1567</div>
<div class="tx" style="left:5.50px;top:386.95px;font-size:10px;color:#444;">16</div>
<div class="tx" style="left:28.75px;top:384.20px;font-size:12px;color:#454545;transform:scaleX(1.046);">2021/7/15</div>
<div class="tx" style="left:88.85px;top:384.70px;font-size:11px;color:#454545;transform:scaleX(1.053);--w:36.07px;">50未満</div>
<div class="tx" style="left:193.00px;top:384.70px;font-size:11px;color:#454545;transform:scaleX(1.014);--w:22.31px;">拠出</div>
<div class="tx" style="left:352.33px;top:384.20px;font-size:11px;color:#454545;transform:scaleX(1.070);--w:23.54px;">万円</div>
<div class="tx" style="left:431.44px;top:384.20px;font-size:12px;color:#454545;transform:scaleX(0.908);">19</div>
<div class="tx" style="left:5.50px;top:405.95px;font-size:10px;color:#444;">17</div>
<div class="tx" style="left:28.75px;top:403.20px;font-size:12px;color:#454545;transform:scaleX(1.046);">2021/7/15</div>
<div class="tx" style="left:88.85px;top:403.70px;font-size:11px;color:#454545;transform:scaleX(1.053);--w:36.07px;">50未満</div>
<div class="tx" style="left:193.00px;top:403.20px;font-size:11px;color:#454545;transform:scaleX(1.012);--w:50.74px;">拠出_税金</div>
<div class="tx" style="left:352.33px;top:403.20px;font-size:11px;color:#454545;transform:scaleX(1.070);--w:23.54px;">万円</div>
<div class="tx" style="left:426.90px;top:403.20px;font-size:12px;color:#454545;transform:scaleX(1.022);">8.1</div>
<div class="tx" style="left:5.50px;top:423.95px;font-size:10px;color:#444;">18</div>
<div class="tx" style="left:28.75px;top:421.20px;font-size:12px;color:#454545;transform:scaleX(1.046);">2021/7/15</div>
<div class="tx" style="left:88.85px;top:421.70px;font-size:11px;color:#454545;transform:scaleX(1.053);--w:36.07px;">50未満</div>
<div class="tx" style="left:193.00px;top:421.20px;font-size:11px;color:#454545;transform:scaleX(1.013);--w:84.19px;">拠出_社会保険料</div>
<div class="tx" style="left:352.33px;top:421.20px;font-size:11px;color:#454545;transform:scaleX(1.070);--w:23.54px;">万円</div>
<div class="tx" style="left:420.46px;top:421.20px;font-size:12px;color:#454545;transform:scaleX(0.991);">10.9</div>
<div class="tx" style="left:5.50px;top:442.95px;font-size:10px;color:#444;">19</div>
<div class="tx" style="left:28.75px;top:440.20px;font-size:12px;color:#454545;transform:scaleX(1.046);">2021/7/15</div>
<div class="tx" style="left:88.85px;top:440.70px;font-size:11px;color:#454545;transform:scaleX(1.053);--w:36.07px;">50未満</div>
<div class="tx" style="left:191.99px;top:440.70px;font-size:11px;color:#454545;transform:scaleX(1.014);--w:22.31px;">受給</div>
<div class="tx" style="left:352.33px;top:440.20px;font-size:11px;color:#454545;transform:scaleX(1.070);--w:23.54px;">万円</div>
<div class="tx" style="left:426.04px;top:440.20px;font-size:12px;color:#454545;transform:scaleX(0.861);">221</div>
<div class="tx" style="left:6.00px;top:461.95px;font-size:10px;color:#444;">20</div>
<div class="tx" style="left:28.75px;top:459.20px;font-size:12px;color:#454545;transform:scaleX(1.046);">2021/7/15</div>
<div class="tx" style="left:88.85px;top:459.70px;font-size:11px;color:#454545;transform:scaleX(1.053);--w:36.07px;">50未満</div>
<div class="tx" style="left:191.99px;top:459.20px;font-size:11px;color:#454545;transform:scaleX(1.013);--w:73.04px;">受給_現金給付</div>
<div class="tx" style="left:352.33px;top:459.20px;font-size:11px;color:#454545;transform:scaleX(1.070);--w:23.54px;">万円</div>
<div class="tx" style="left:415.06px;top:459.20px;font-size:12px;color:#454545;transform:scaleX(0.940);">161.2</div>
<div class="tx" style="left:6.00px;top:480.95px;font-size:10px;color:#444;">21</div>
<div class="tx" style="left:28.75px;top:478.20px;font-size:12px;color:#454545;transform:scaleX(1.046);">2021/7/15</div>
<div class="tx" style="left:88.85px;top:478.70px;font-size:11px;color:#454545;transform:scaleX(1.053);--w:36.07px;">50未満</div>
<div class="tx" style="left:191.99px;top:478.20px;font-size:11px;color:#454545;transform:scaleX(1.013);--w:73.04px;">受給_現物給付</div>
<div class="tx" style="left:352.33px;top:478.20px;font-size:11px;color:#454545;transform:scaleX(1.070);--w:23.54px;">万円</div>
<div class="tx" style="left:420.46px;top:478.20px;font-size:12px;color:#454545;transform:scaleX(0.991);">59.7</div>
<div class="tx" style="left:6.00px;top:498.95px;font-size:10px;color:#444;">22</div>
<div class="tx" style="left:28.75px;top:496.20px;font-size:12px;color:#454545;transform:scaleX(1.046);">2021/7/15</div>
<div class="tx" style="left:88.87px;top:496.70px;font-size:11px;color:#454545;transform:scaleX(1.030);--w:42.84px;">50～100</div>
<div class="tx" style="left:191.97px;top:496.20px;font-size:11px;color:#454545;transform:scaleX(1.030);--w:67.96px;">等価当初所得</div>
<div class="tx" style="left:352.33px;top:496.20px;font-size:11px;color:#454545;transform:scaleX(1.070);--w:23.54px;">万円</div>
<div class="tx" style="left:421.45px;top:496.20px;font-size:12px;color:#454545;transform:scaleX(0.948);">74.5</div>
<div class="tx" style="left:6.00px;top:517.95px;font-size:10px;color:#444;">23</div>
<div class="tx" style="left:28.75px;top:515.20px;font-size:12px;color:#454545;transform:scaleX(1.046);">2021/7/15</div>
<div class="tx" style="left:88.87px;top:515.70px;font-size:11px;color:#454545;transform:scaleX(1.030);--w:42.84px;">50～100</div>
<div class="tx" style="left:191.97px;top:515.70px;font-size:11px;color:#454545;transform:scaleX(1.033);--w:56.82px;">等価総所得</div>
<div class="tx" style="left:352.33px;top:515.20px;font-size:11px;color:#454545;transform:scaleX(1.070);--w:23.54px;">万円</div>
<div class="tx" style="left:426.04px;top:515.20px;font-size:12px;color:#454545;transform:scaleX(0.861);">196</div>
<div class="tx" style="left:6.00px;top:536.95px;font-size:10px;color:#444;">24</div>
<div class="tx" style="left:28.75px;top:534.20px;font-size:12px;color:#454545;transform:scaleX(1.046);">2021/7/15</div>
<div class="tx" style="left:88.87px;top:534.70px;font-size:11px;color:#454545;transform:scaleX(1.030);--w:42.84px;">50～100</div>
<div class="tx" style="left:191.97px;top:534.20px;font-size:11px;color:#454545;transform:scaleX(1.027);--w:79.10px;">等価再分配所得</div>
<div class="tx" style="left:352.33px;top:534.20px;font-size:11px;color:#454545;transform:scaleX(1.070);--w:23.54px;">万円</div>
<div class="tx" style="left:415.06px;top:534.20px;font-size:12px;color:#454545;transform:scaleX(0.940);">227.9</div>
<div class="tx" style="left:6.00px;top:555.95px;font-size:10px;color:#444;">25</div>
<div class="tx" style="left:28.75px;top:553.20px;font-size:12px;color:#454545;transform:scaleX(1.046);">2021/7/15</div>
<div class="tx" style="left:88.87px;top:553.70px;font-size:11px;color:#454545;transform:scaleX(1.030);--w:42.84px;">50～100</div>
<div class="tx" style="left:191.99px;top:553.20px;font-size:11px;color:#454545;transform:scaleX(1.014);--w:55.76px;">再分配係数</div>
<div class="tx" style="left:353.40px;top:553.70px;font-size:11.5px;color:#454545;">%</div>
<div class="tx" style="left:415.06px;top:553.20px;font-size:12px;color:#454545;transform:scaleX(0.940);">205.8</div>
<div class="tx" style="left:6.00px;top:573.95px;font-size:10px;color:#444;">26</div>
<div class="tx" style="left:28.75px;top:571.20px;font-size:12px;color:#454545;transform:scaleX(1.046);">2021/7/15</div>
<div class="tx" style="left:88.87px;top:571.70px;font-size:11px;color:#454545;transform:scaleX(1.030);--w:42.84px;">50～100</div>
<div class="tx" style="left:193.00px;top:571.70px;font-size:11px;color:#454545;transform:scaleX(1.014);--w:22.31px;">拠出</div>
<div class="tx" style="left:352.33px;top:571.20px;font-size:11px;color:#454545;transform:scaleX(1.070);--w:23.54px;">万円</div>
<div class="tx" style="left:420.46px;top:571.20px;font-size:12px;color:#454545;transform:scaleX(0.991);">25.6</div>
<div class="tx" style="left:6.00px;top:592.95px;font-size:10px;color:#444;">27</div>
<div class="tx" style="left:28.75px;top:590.20px;font-size:12px;color:#454545;transform:scaleX(1.046);">2021/7/15</div>
<div class="tx" style="left:88.87px;top:590.70px;font-size:11px;color:#454545;transform:scaleX(1.030);--w:42.84px;">50～100</div>
<div class="tx" style="left:193.00px;top:590.20px;font-size:11px;color:#454545;transform:scaleX(1.012);--w:50.74px;">拠出_税金</div>
<div class="tx" style="left:352.33px;top:590.20px;font-size:11px;color:#454545;transform:scaleX(1.070);--w:23.54px;">万円</div>
<div class="tx" style="left:420.46px;top:590.20px;font-size:12px;color:#454545;transform:scaleX(0.991);">10.8</div>
</div>
<div class="tx" style="left:903.63px;top:73.00px;font-size:11px;font-weight:bold;color:#242424;transform:scaleX(0.869);--w:57.37px;">クエリと接続</div>
<div class="tx" style="left:903.98px;top:98.95px;font-size:11px;font-weight:bold;color:#242424;transform:scaleX(1.023);--w:33.77px;">クエリ</div>
<div class="tx" style="left:952.00px;top:99.45px;font-size:11px;color:#616161;transform:scaleX(0.955);--w:21.00px;">接続</div>
<div class="tx" style="left:904.09px;top:125.25px;font-size:10.5px;color:#616161;transform:scaleX(0.912);--w:58.13px;">1 個のクエリ</div>
<div class="tx" style="left:926.00px;top:154.20px;font-size:12px;color:#646464;transform:scaleX(1.028);">00450-mhlw-00450422-esturan...</div>
<div class="tx" style="left:924.95px;top:172.75px;font-size:11px;color:#424242;transform:scaleX(1.049);--w:137.83px;">360 行読み込まれました。</div>
<div class="tx" style="left:95.00px;top:600.00px;font-size:12.5px;color:#242424;transform:scaleX(0.928);">data</div>
<div class="tx" style="left:140.03px;top:602.15px;font-size:12.5px;color:#424242;transform:scaleX(0.971);">pivot</div>
<script>
(function(){var a=document.querySelectorAll('.tx');for(var i=0;i<a.length;i++){var e=a[i];var w=parseFloat(e.style.getPropertyValue('--w'));if(!w)continue;var t=e.style.transform;e.style.transform='none';var n=e.getBoundingClientRect().width;if(n>0){e.style.transform='scaleX('+(w/n).toFixed(4)+')';}else{e.style.transform=t;}}})();
</script>
</body></html>
